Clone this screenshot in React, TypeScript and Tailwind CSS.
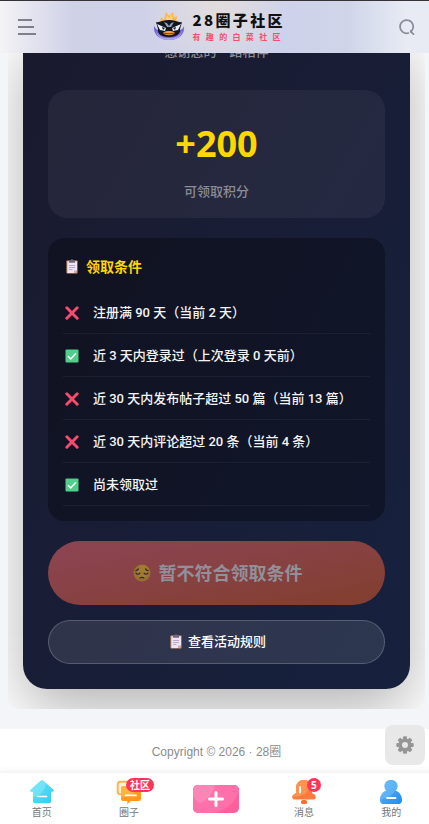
import {useState} from 'react'

interface Condition {
  text: string
  met: boolean
}

const conditions: Condition[] = [
  {text: '注册满 90 天（当前 2 天）', met: false},
  {text: '近 3 天内登录过（上次登录 0 天前）', met: true},
  {text: '近 30 天内发布帖子超过 50 篇（当前 13 篇）', met: false},
  {text: '近 30 天内评论超过 20 条（当前 4 条）', met: false},
  {text: '尚未领取过', met: true},
]

function MascotIcon() {
  return (
    <svg viewBox="0 0 32 32" className="h-8 w-8 shrink-0" aria-hidden="true">
      <path d="M7 13 8 6l3 3 2-8 3 4 4-4 1 6 3-2-1 8z" fill="#ffb347" />
      <path d="m12 11 2-7 2 3 3-4 1 8z" fill="#ffd27a" />
      <path d="M1 15c2 3 3 4 5 4h20c2 0 4-1 5-4 1 7-4 14-15 14S0 22 1 15z" fill="#7566d6" />
      <path d="M3 20c3 6 7 7 13 7s10-1 13-7c-1 6-6 9-13 9S4 26 3 20z" fill="#aaa2f2" />
      <path d="M3 11c3 1 7-2 13-2s10 3 13 2l-2 7c1 5-4 8-11 8S4 23 5 18z" fill="#15151f" />
      <path d="m4 13 9 4-1 3-5-1zM28 13l-9 4 1 3 5-1z" fill="#e8f1fa" />
      <path d="m9 16 3 1-2 2zM23 16l-3 1 2 2z" fill="#15151f" />
      <path d="m11 11 5 2 5-2-3 5h-4z" fill="#8fa3b5" />
      <path d="m14 12 2 3 2-3z" fill="#15151f" />
      <path d="M10 22c2-2 4-2 6-2s4 0 6 2c-2 3-10 3-12 0z" fill="#f79a3e" />
      <path d="M10 22c4 1 8 1 12 0" fill="none" stroke="#8a4013" />
    </svg>
  )
}

function ClipboardIcon() {
  return (
    <svg viewBox="-2 0 16 16" className="h-4 w-4 shrink-0" aria-hidden="true">
      <rect x="1.5" y="1.5" width="11" height="13" rx="0.7" fill="#e19a69" />
      <path d="M2.5 2.5h9.5v9L9 14H2.5z" fill="#eee4f4" />
      <path d="M12 11.5 9 14v-2.5z" fill="#bda9c8" />
      <path d="M4 1.5h1.8a1.2 1.2 0 0 1 2.4 0H10v2.3H4z" fill="#6f6a80" />
      <path d="M4 6.5h6M4 8.5h6M4 10.5h3.5" stroke="#a99bb8" strokeWidth="0.8" />
    </svg>
  )
}

function StatusIcon({met}: {met: boolean}) {
  return (
    <svg viewBox="0 0 14 14" className="h-3.5 w-3.5" role="img" aria-label={met ? '已满足' : '未满足'}>
      {met ? (
        <>
          <rect x="0.5" y="0.5" width="13" height="13" rx="1" fill="#4fd08a" />
          <path d="m3 7.3 2.7 2.6L11 4.2" fill="none" stroke="#fff" strokeWidth="1.5" />
        </>
      ) : (
        <path d="m1.8 1.8 10.400 10.400m0-10.400-10.400 10.400" stroke="#fa4a70" strokeWidth="2.9" strokeLinecap="round" />
      )}
    </svg>
  )
}

function SadFaceIcon() {
  return (
    <svg viewBox="-2 0 20 18" className="h-[18px] w-5 shrink-0" aria-hidden="true">
      <circle cx="9" cy="9" r="8.5" fill="#98702e" />
      <circle cx="10" cy="7.5" r="6.5" fill="#a37a32" />
      <path
        d="M2.7 6.8c1.2-.2 2.2-.9 2.8-1.9M15.3 6.8c-1.2-.2-2.2-.9-2.8-1.9M3 9.2c1 1.3 3 1.3 4 0M11 9.2c1 1.3 3 1.3 4 0M7 14c1.2-.8 2.8-.8 4 0"
        fill="none"
        stroke="#2b2634"
        strokeWidth="1.1"
        strokeLinecap="round"
      />
    </svg>
  )
}

function GearIcon() {
  return (
    <svg viewBox="0 0 18 18" className="h-[18px] w-[18px]" aria-hidden="true">
      <g fill="#969696">
        <rect x="7" y="0.3" width="4" height="17.4" rx="1" />
        <rect x="7" y="0.3" width="4" height="17.4" rx="1" transform="rotate(45 9 9)" />
        <rect x="7" y="0.3" width="4" height="17.4" rx="1" transform="rotate(90 9 9)" />
        <rect x="7" y="0.3" width="4" height="17.4" rx="1" transform="rotate(135 9 9)" />
        <circle cx="9" cy="9" r="6.6" />
      </g>
      <circle cx="9" cy="9" r="3" fill="#e8e8e8" />
    </svg>
  )
}

function HomeIcon() {
  return (
    <svg viewBox="0 0 26 26" className="h-[26px] w-[26px]" aria-hidden="true">
      <defs>
        <linearGradient id="home" x1="0" y1="0" x2="1" y2="1">
          <stop offset="0" stopColor="#6fe3f7" />
          <stop offset="1" stopColor="#2bcdf3" />
        </linearGradient>
      </defs>
      <path
        d="M11.3 2.1 1.6 10.7c-.9.9-.4 2 .8 2H4v9.2c0 1.6.8 2.3 2.3 2.3h13.4c1.5 0 2.3-.7 2.3-2.3v-9.2h1.6c1.2 0 1.7-1.1.8-2L14.7 2.1a2.6 2.6 0 0 0-3.4 0z"
        fill="url(#home)"
      />
      <path d="M11.3 2.1 1.6 10.7c-.9.9-.4 2 .8 2H4v5.5c7-1 12.5-7 13-13.800l-2.300-2.300a2.600 2.600 0 0 0-3.400 0z" fill="#8becfa" opacity="0.5" />
      <path d="M9 17.5h8.5" stroke="#fff" strokeWidth="1.6" strokeLinecap="round" />
    </svg>
  )
}

function CircleIcon() {
  return (
    <svg viewBox="0 0 26 26" className="h-[26px] w-[26px]" aria-hidden="true">
      <rect x="1.7" y="2.7" width="15" height="12.5" rx="2.5" fill="#fff2dc" stroke="#fdb64f" strokeWidth="2" />
      <path d="M7.5 7h15A2.500 2.500 0 0 1 25 9.500v10a2.500 2.500 0 0 1-2.500 2.500H15l-3.700 3.200V22H7.500A2.500 2.500 0 0 1 5 19.500v-10A2.500 2.500 0 0 1 7.500 7z" fill="#ff991f" />
      <path d="M7.500 7h14C20 14 13 18 5 18.500v-9A2.500 2.500 0 0 1 7.500 7z" fill="#ffb33f" />
      <path d="M9.5 16.300h10.500" stroke="#fff" strokeWidth="1.8" strokeLinecap="round" />
    </svg>
  )
}

function BellIcon() {
  return (
    <svg viewBox="0 0 26 26" className="h-[26px] w-[26px]" aria-hidden="true">
      <rect x="10" y="21" width="6" height="4" rx="1.5" fill="#ff7133" />
      <path d="M13 1c5 0 8 3.500 8 8v5l3 2c1.500 2 .5 4.500-1.500 4.500h-19c-2 0-3-2.500-1.500-4.500l3-2V9c0-4.500 3-8 8-8z" fill="#ff7a3d" />
      <path d="M13 1c3.500 0 6 1.500 7 4.500-1 7-8 12-18.700 12.500.1-.8.300-1.500.7-2l3-2V9c0-4.500 3-8 8-8z" fill="#ff9450" />
      <path d="M9 8v5.500" stroke="#fff" strokeWidth="1.900" strokeLinecap="round" />
    </svg>
  )
}

function UserIcon() {
  return (
    <svg viewBox="0 0 26 26" className="h-[26px] w-[26px]" aria-hidden="true">
      <defs>
        <linearGradient id="user" x1="0" y1="0" x2="1" y2="1">
          <stop offset="0" stopColor="#62b5f8" />
          <stop offset="1" stopColor="#1e8ded" />
        </linearGradient>
      </defs>
      <path d="M13 1c4 0 6.500 2.700 6.500 6 0 2-.8 3.500-2 4.500 4 1.500 6.500 5 6.500 9.500 0 2.500-1.200 4-3.500 4h-15C3.200 25 2 23.500 2 21c0-4.500 2.500-8 6.500-9.500-1.200-1-2-2.500-2-4.500 0-3.300 2.500-6 6.500-6z" fill="url(#user)" />
      <path d="M13 1c4 0 6.500 2.700 6.500 6 0 2-.8 3.500-2 4.500C15 16 9 20 2 20.500c.2-4.300 2.700-7.600 6.500-9-1.200-1-2-2.500-2-4.500 0-3.300 2.500-6 6.500-6z" fill="#76c2fb" opacity="0.5" />
      <path d="M9 19h8.500" stroke="#fff" strokeWidth="1.800" strokeLinecap="round" />
    </svg>
  )
}

interface NavItemProps {
  label: string
  icon: React.ReactNode
  badge?: string
}

function NavItem({label, icon, badge}: NavItemProps) {
  // short counts hang further out than word badges
  const badgePlace = badge && badge.length > 1 ? 'left-2.5 px-1' : 'left-4'

  return (
    <a href="#" className="flex flex-col items-center pt-1.5 text-[10px] leading-3.5 text-[#777]">
      <span className="relative">
        {icon}
        {badge && (
          <span
            className={`absolute -top-px h-3.5 min-w-3.5 rounded-full bg-[#ff3557] text-center text-[10px] leading-3.5 font-bold whitespace-nowrap text-white ${badgePlace}`}
          >
            {badge}
          </span>
        )}
      </span>
      {label}
    </a>
  )
}

export default function App() {
  const [menuOpen, setMenuOpen] = useState(false)

  return (
    <div className="min-h-screen overflow-x-clip bg-[#f4f5f8] font-['Noto_Sans','Noto_Sans_CJK_SC',sans-serif]">
      <div className="-mr-1 flex min-h-screen flex-col">
        <header className="sticky top-0 z-20 flex h-[53px] items-center justify-between border-t border-[#353338] bg-[radial-gradient(circle_at_50%_0%,#e2dcdc_0%,#dcdae2_12%,transparent_34%),linear-gradient(90deg,#f4f3f6_0%,#e2e2ef_8%,#cfd1e7_17%,#ced1eb_65%,#cfd5e9_80%,#e8ebf4_94%)] px-[18px]">
          <button
            type="button"
            aria-label="菜单"
            aria-expanded={menuOpen}
            onClick={() => setMenuOpen(!menuOpen)}
            className="flex w-[18px] flex-col gap-[5px]"
          >
            <span className="h-0.5 w-3.5 bg-[#7f7f8b]" />
            <span className="h-0.5 w-4 bg-[#7f7f8b]" />
            <span className="h-0.5 w-[18px] bg-[#7f7f8b]" />
          </button>

          <a href="#" className="flex items-center gap-2">
            <MascotIcon />
            <div className="w-[90px]">
              <div className="flex justify-between text-[15px] leading-5 font-black text-[#111] font-['Noto_Sans_CJK_SC',sans-serif]">
                {[...'28圈子社区'].map((char) => (
                  <span key={char}>{char}</span>
                ))}
              </div>
              <div className="flex justify-between pr-0.5 text-[8px] leading-3.5 font-bold text-[#f2506a]">
                {[...'有趣的白菜社区'].map((char) => (
                  <span key={char}>{char}</span>
                ))}
              </div>
            </div>
          </a>

          <button type="button" aria-label="搜索">
            <svg viewBox="0 0 16 16" className="h-4 w-4" fill="none" stroke="#888b98" strokeWidth="1.7" strokeLinecap="round">
              <path d="M9.500 14A6.600 6.600 0 1 1 12.600 12M12 11.500l-.3 1.200 2.800 2.500" />
            </svg>
          </button>
        </header>

        {/* content starts scrolled under the header */}
        <main className="mx-2 -mt-5 mb-5 overflow-hidden rounded-b-[10px] bg-white px-[15px] pb-5">
          <section className="rounded-b-3xl bg-linear-to-br from-[#1a1a2e] to-[#16213e] px-[25px] pt-2 pb-[25px] shadow-[0_20px_60px_rgba(0,0,0,0.3)]">
            <p className="mb-[29px] text-center text-[13px] leading-5 font-medium text-[#8c8c96]">
              感谢您的一路相伴
            </p>

            <div className="mb-5 rounded-[20px] bg-white/5 pt-[30px] pb-4 text-center">
              <div className="mb-3 text-4xl leading-[48px] font-bold text-[#ffd700]">+200</div>
              <div className="text-[13px] leading-[22px] font-medium text-[#8c8c98]">可领取积分</div>
            </div>

            <div className="mb-5 rounded-2xl bg-black/30 p-[15px]">
              <h2 className="mb-2.5 flex items-center gap-[7px] text-sm leading-7 font-bold text-[#ffd700]">
                <ClipboardIcon />
                领取条件
              </h2>
              <ul>
                {conditions.map((condition) => (
                  <li
                    key={condition.text}
                    className="flex h-[43px] items-center gap-3.5 border-b border-white/5 pt-0.5 pl-0.5 text-[13px] font-medium whitespace-nowrap text-[#f3f3f5] font-['Roboto','Noto_Sans_CJK_SC',sans-serif]"
                  >
                    <StatusIcon met={condition.met} />
                    {condition.text}
                  </li>
                ))}
              </ul>
            </div>

            <button
              type="button"
              disabled
              className="mb-[15px] flex h-16 w-full items-center justify-center gap-2 rounded-full bg-linear-to-br from-[#8d4454] to-[#823e2d] text-lg font-bold text-[#91909b]"
            >
              <SadFaceIcon />
              暂不符合领取条件
            </button>
            <button
              type="button"
              className="flex h-11 w-full items-center justify-center gap-[5px] rounded-full border border-white/20 bg-white/10 text-[13px] font-medium text-white"
            >
              <ClipboardIcon />
              查看活动规则
            </button>
          </section>
        </main>

        <footer className="flex-1 bg-white pt-[13px] pb-[11px] text-center text-xs leading-5 text-[#8c8c8c] font-['Liberation_Sans','Noto_Sans_CJK_SC',sans-serif]">
          Copyright © 2026 · 28圈
        </footer>

        <nav className="sticky bottom-0 z-10 -mx-0.5 grid h-[52px] grid-cols-5 bg-white shadow-[0_0_8px_rgba(0,0,0,0.1)]">
          <NavItem label="首页" icon={<HomeIcon />} />
          <NavItem label="圈子" icon={<CircleIcon />} badge="社区" />
          <button type="button" aria-label="发布" className="mt-3 h-7 w-[46px] justify-self-center">
            <svg viewBox="0 0 46 28" className="h-7 w-[46px]" aria-hidden="true">
              <rect width="46" height="28" rx="5" fill="#ff609c" />
              <path d="M5 0h36a5 5 0 0 1 5 5c-3 12-12 20-26 23H5a5 5 0 0 1-5-5V5a5 5 0 0 1 5-5z" fill="#fd70aa" />
              <path d="M5 0h17C20 9 14 16 7 18 4 17 2 14 0 11V5a5 5 0 0 1 5-5z" fill="#fb86b6" />
              <path d="M23 7.500v13M16.500 14h13" stroke="#fff" strokeWidth="3" strokeLinecap="round" />
            </svg>
          </button>
          <NavItem label="消息" icon={<BellIcon />} badge="5" />
          <NavItem label="我的" icon={<UserIcon />} />
        </nav>
      </div>

      <button
        type="button"
        aria-label="设置"
        className="fixed right-1 bottom-[59px] z-10 flex h-10 w-10 items-center justify-center rounded-lg bg-[#e8e8e8]"
      >
        <GearIcon />
      </button>
    </div>
  )
}
